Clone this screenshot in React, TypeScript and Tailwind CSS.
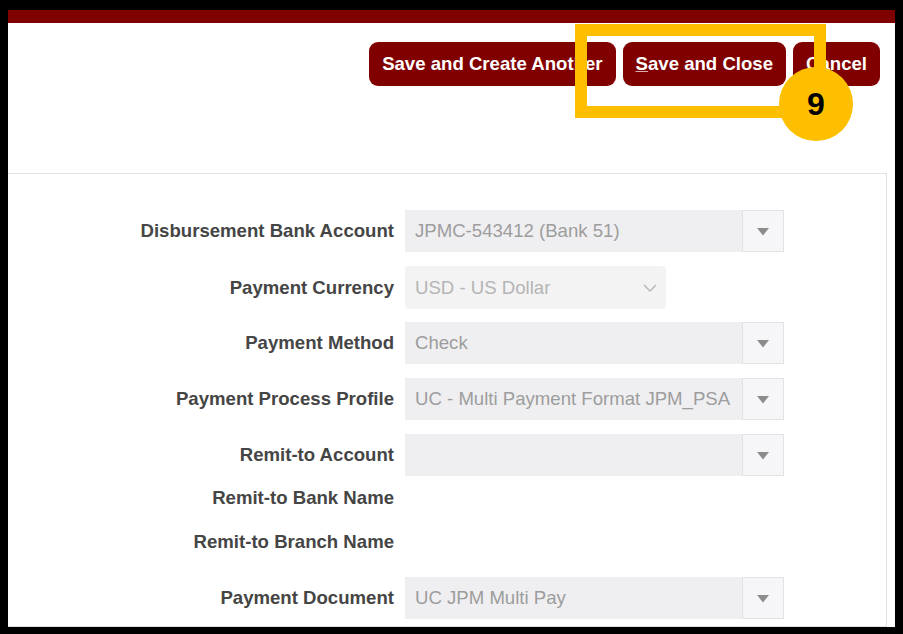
import React from "react";

const Tri = () => (
  <div className="w-[42px] h-full flex items-center justify-center bg-[#f6f6f8] border border-[#e3e3e6]">
    <svg width="14" height="9" viewBox="0 0 14 9">
      <polygon points="1,1 13,1 7,8.5" fill="#8c8c8c" />
    </svg>
  </div>
);

const Row = ({ label, value, h = "h-[42px]", mt = "" }: { label: string; value: string; h?: string; mt?: string }) => (
  <div className={`flex items-center ${h} ${mt}`}>
    <div className="w-[386px] text-right font-bold text-[18.6px] text-[#454545]">{label}</div>
    <div className="ml-[11px] w-[379px] h-full flex bg-[#efeff1]">
      <div className="flex-1 flex items-center pl-[10px] text-[18.6px] text-[#9d9d9d]">{value}</div>
      <Tri />
    </div>
  </div>
);

export default function App() {
  return (
    <div
      className="relative w-[903px] h-[634px] bg-black pl-[8px] pr-[8px] pt-[10px] pb-[7px] overflow-hidden"
      style={{ fontFamily: '"Liberation Sans", Arial, sans-serif' }}
    >
      <div className="w-full h-full bg-white flex flex-col overflow-hidden">
        <div className="h-[13px] bg-[#7f0000] shrink-0" />
        <div className="flex justify-end gap-[7px] pr-[15px] pt-[19px] shrink-0">
          <button className="h-[44px] px-[13px] rounded-[9px] bg-[#800000] text-white font-bold text-[18.6px]">
            Save and Create Another
          </button>
          <button className="h-[44px] px-[13px] rounded-[9px] bg-[#800000] text-white font-bold text-[18.6px]">
            <span className="underline decoration-[#d9b0b0]">S</span>ave and Close
          </button>
          <button className="h-[44px] px-[13px] rounded-[9px] bg-[#800000] text-white font-bold text-[18.6px]">
            Cancel
          </button>
        </div>
        <div className="mt-[87px] mr-[8px] flex-1 border-t border-r border-b border-[#dde3e8] pt-[36px]">
          <div className="flex flex-col">
            <Row label="Disbursement Bank Account" value="JPMC-543412 (Bank 51)" />
            <div className="flex items-center h-[43px] mt-[14px]">
              <div className="w-[386px] text-right font-bold text-[18.6px] text-[#454545]">Payment Currency</div>
              <div className="ml-[11px] w-[261px] h-full flex items-center justify-between bg-[#f3f3f4] rounded-[4px] pl-[10px] pr-[8px]">
                <span className="text-[18.6px] text-[#b5b5b5]">USD - US Dollar</span>
                <svg width="16" height="10" viewBox="0 0 16 10">
                  <polyline points="2,2 8,8 14,2" fill="none" stroke="#b8b8b8" strokeWidth="1.5" />
                </svg>
              </div>
            </div>
            <Row label="Payment Method" value="Check" mt="mt-[13px]" />
            <Row label="Payment Process Profile" value="UC - Multi Payment Format JPM_PSA" mt="mt-[14px]" />
            <Row label="Remit-to Account" value="" mt="mt-[14px]" />
            <div className="flex items-center h-[44px]">
              <div className="w-[386px] text-right font-bold text-[18.6px] text-[#454545]">Remit-to Bank Name</div>
            </div>
            <div className="flex items-center h-[44px]">
              <div className="w-[386px] text-right font-bold text-[18.6px] text-[#454545]">Remit-to Branch Name</div>
            </div>
            <Row label="Payment Document" value="UC JPM Multi Pay" mt="mt-[13px]" />
          </div>
        </div>
      </div>
      <div className="absolute left-[575px] top-[24px] w-[251px] h-[94px] border-[12px] border-[#fdbf00]" />
      <div className="absolute left-[779px] top-[67px] w-[74px] h-[74px] rounded-full bg-[#fdbf00] flex items-center justify-center text-black font-bold text-[32px]">
        9
      </div>
    </div>
  );
}
